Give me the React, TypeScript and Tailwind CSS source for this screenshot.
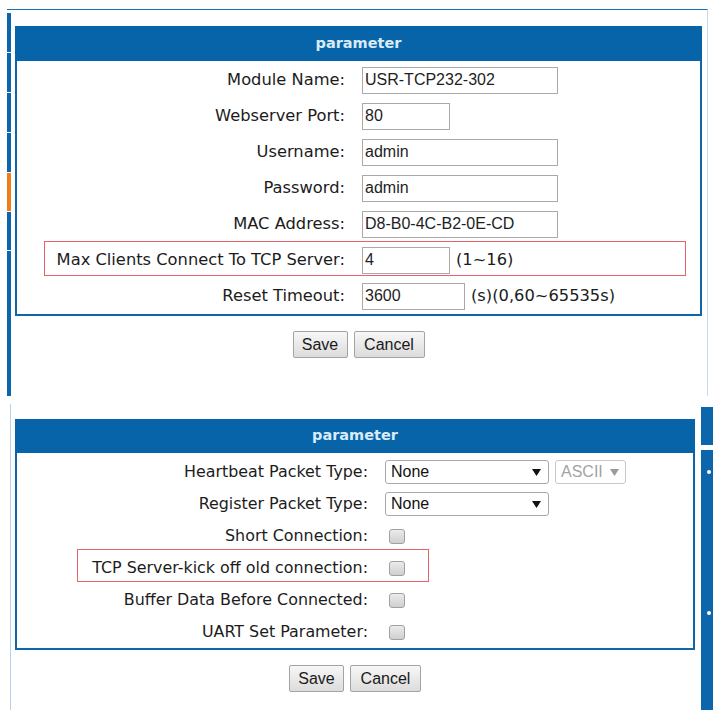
import React from "react";

const LABEL = "font-['DejaVu_Sans',sans-serif] leading-none text-[#1c1c1c] whitespace-nowrap";
const ARIAL = "font-['Liberation_Sans',Arial,sans-serif]";

function Header({ h }: { h: string }) {
  return (
    <div className={`flex ${h} items-center justify-center bg-[#0764a9] font-['DejaVu_Sans',sans-serif] text-[14.5px] font-bold text-[#d9ebf7]`}>
      parameter
    </div>
  );
}

function TextInput({ value, w }: { value: string; w: string }) {
  return (
    <input
      readOnly
      value={value}
      className={`${ARIAL} h-[27px] ${w} border border-[#a9a9a9] bg-white px-[2px] text-[16px] text-[#1e1e1e] outline-none`}
    />
  );
}

function Row1({ label, children, boxed }: { label: string; children: React.ReactNode; boxed?: boolean }) {
  return (
    <div className="relative flex h-[36px] items-center">
      {boxed && (
        <div className="pointer-events-none absolute left-[27px] top-[-1px] h-[35px] w-[642px] border border-[#e4646a]" />
      )}
      <div className={`w-[328px] text-right text-[16.3px] ${LABEL}`}>{label}</div>
      <div className="ml-[17px] flex items-center">{children}</div>
    </div>
  );
}

function Hint({ text }: { text: string }) {
  return <span className={`ml-[6px] text-[16.3px] ${LABEL}`}>{text}</span>;
}

function Arrow({ gray }: { gray?: boolean }) {
  return (
    <svg width="9" height="7" viewBox="0 0 9 7" className="shrink-0">
      <path d="M0 0 L9 0 L4.5 7 Z" fill={gray ? "#9a9a9a" : "#111"} />
    </svg>
  );
}

function Select({ value }: { value: string }) {
  return (
    <div className={`${ARIAL} flex h-[24px] w-[164px] items-center justify-between rounded-[3px] border border-[#a8a8a8] bg-white pl-[5px] pr-[7px] text-[16px] text-[#111]`}>
      <span>{value}</span>
      <Arrow />
    </div>
  );
}

function AsciiSelect() {
  return (
    <div className={`${ARIAL} ml-[6px] flex h-[24px] w-[71px] items-center justify-between rounded-[3px] border border-[#c9c9c9] bg-white pl-[5px] pr-[6px] text-[16px] text-[#a3a3a3]`}>
      <span>ASCII</span>
      <Arrow gray />
    </div>
  );
}

function Checkbox() {
  return (
    <div className="ml-[4px] h-[15px] w-[16px] rounded-[3px] border border-[#a0a0a0] bg-linear-to-b from-[#ebebeb] to-[#cfcfcf]" />
  );
}

function Row2({ label, children, boxed }: { label: string; children: React.ReactNode; boxed?: boolean }) {
  return (
    <div className="relative flex h-[32px] items-center">
      {boxed && (
        <div className="pointer-events-none absolute left-[60px] top-[-3px] h-[33px] w-[352px] border border-[#e4646a]" />
      )}
      <div className={`w-[351px] text-right text-[15.9px] ${LABEL}`}>{label}</div>
      <div className="ml-[17px] flex items-center">{children}</div>
    </div>
  );
}

function Buttons() {
  const btn = `${ARIAL} flex h-[27px] items-center justify-center rounded-[2px] border border-[#a3a3a3] bg-linear-to-b from-[#f7f7f7] to-[#dcdcdc] text-[16px] text-[#1a1a1a]`;
  return (
    <div className="mt-[15px] flex justify-center gap-[6px]">
      <button className={`${btn} w-[55px]`}>Save</button>
      <button className={`${btn} w-[71px]`}>Cancel</button>
    </div>
  );
}

function Sidebar() {
  const blue = "bg-[#0b66ac]";
  return (
    <div className="flex w-[4px] flex-col gap-[1px]">
      <div className={`h-[39px] ${blue}`} />
      <div className={`h-[39px] ${blue}`} />
      <div className={`h-[39px] ${blue}`} />
      <div className={`h-[39px] ${blue}`} />
      <div className="h-[38px] bg-[#ee7d1a]" />
      <div className={`h-[38px] ${blue}`} />
      <div className={`flex-1 ${blue}`} />
    </div>
  );
}

export default function App() {
  return (
    <div className="h-[721px] w-[724px] overflow-hidden bg-white">
      {/* Section 1 */}
      <div className="h-[396px] pl-[7px] pt-[9px]">
        <div className="flex h-[387px] w-[701px] border-r border-t border-r-[#c9dbea] border-t-[#1f6fae] pt-[3px]">
          <Sidebar />
          <div className="ml-[4px] mt-[13px] w-[687px]">
            <Header h="h-[35px]" />
            <div className="border-2 border-t-0 border-[#0f67aa] bg-white pt-[1px]">
              <Row1 label="Module Name:">
                <TextInput value="USR-TCP232-302" w="w-[196px]" />
              </Row1>
              <Row1 label="Webserver Port:">
                <TextInput value="80" w="w-[88px]" />
              </Row1>
              <Row1 label="Username:">
                <TextInput value="admin" w="w-[196px]" />
              </Row1>
              <Row1 label="Password:">
                <TextInput value="admin" w="w-[196px]" />
              </Row1>
              <Row1 label="MAC Address:">
                <TextInput value="D8-B0-4C-B2-0E-CD" w="w-[196px]" />
              </Row1>
              <Row1 label="Max Clients Connect To TCP Server:" boxed>
                <TextInput value="4" w="w-[88px]" />
                <Hint text="(1~16)" />
              </Row1>
              <Row1 label="Reset Timeout:">
                <TextInput value="3600" w="w-[103px]" />
                <Hint text="(s)(0,60~65535s)" />
              </Row1>
            </div>
            <Buttons />
          </div>
        </div>
      </div>

      {/* Section 2 */}
      <div className="flex h-[325px]">
        <div className="ml-[10px] mt-[8px] h-[306px] w-px bg-[#b7d1ea]" />
        <div className="ml-[4px] mt-[23px] w-[680px]">
          <Header h="h-[34px]" />
          <div className="border-2 border-t-0 border-[#0f67aa] bg-white pt-[3px]">
            <Row2 label="Heartbeat Packet Type:">
              <Select value="None" />
              <AsciiSelect />
            </Row2>
            <Row2 label="Register Packet Type:">
              <Select value="None" />
            </Row2>
            <Row2 label="Short Connection:">
              <Checkbox />
            </Row2>
            <Row2 label="TCP Server-kick off old connection:" boxed>
              <Checkbox />
            </Row2>
            <Row2 label="Buffer Data Before Connected:">
              <Checkbox />
            </Row2>
            <Row2 label="UART Set Parameter:">
              <Checkbox />
            </Row2>
          </div>
          <Buttons />
        </div>
        <div className="ml-[6px] mt-[11px] flex h-[303px] w-[12px] flex-col">
          <div className="h-[38px] bg-[#0b66ac]" />
          <div className="h-[5px] bg-white" />
          <div className="relative flex-1 bg-[#0b66ac]">
            <div className="absolute left-[6px] top-[20px] h-[4px] w-[4px] rounded-full bg-white" />
            <div className="absolute left-[6px] top-[161px] h-[4px] w-[4px] rounded-full bg-white" />
          </div>
        </div>
      </div>
    </div>
  );
}
